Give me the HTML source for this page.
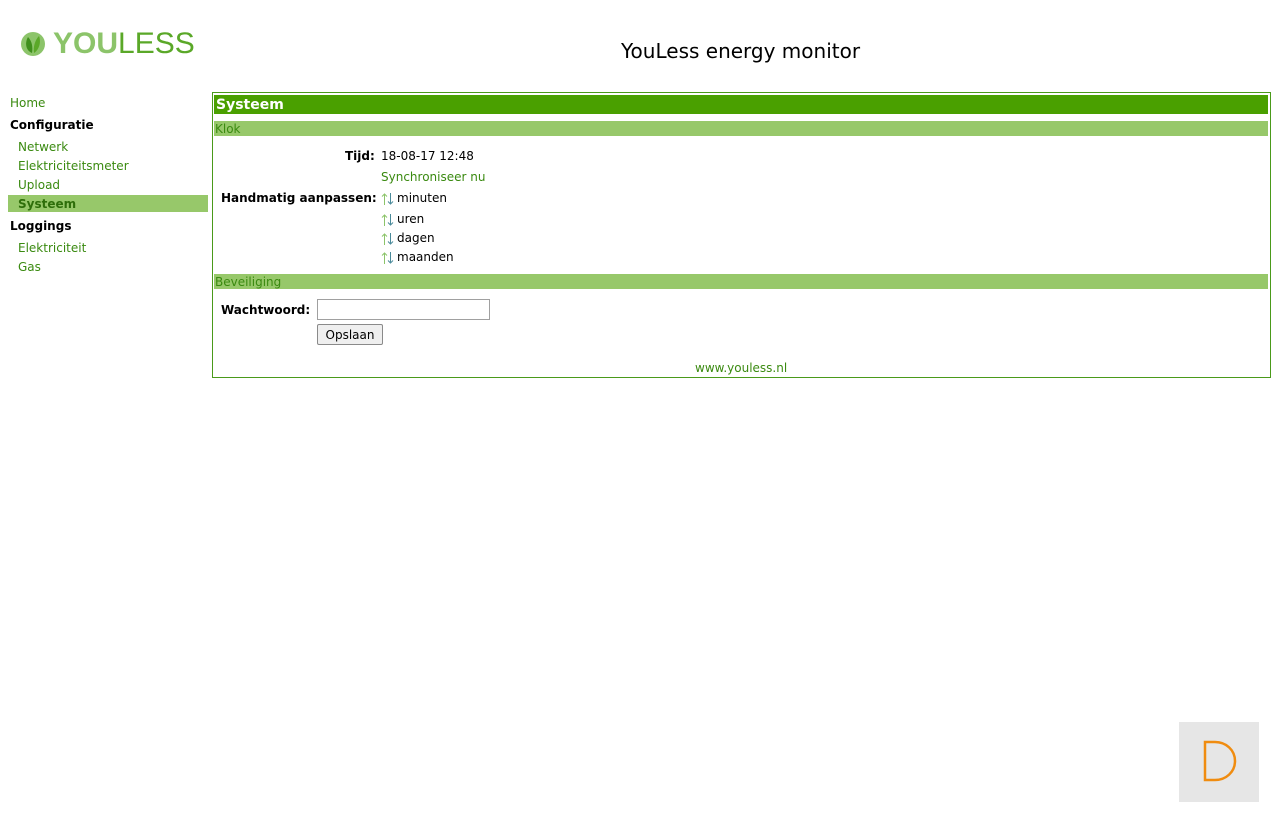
<!DOCTYPE html>
<html><head><meta charset="utf-8"><style>
*{margin:0;padding:0;box-sizing:border-box}
body{width:1279px;height:822px;background:#fff;font-family:"DejaVu Sans","Liberation Sans",sans-serif;font-size:12px;color:#000;position:relative;overflow:hidden}
.a{position:absolute;white-space:nowrap}
.t{margin-top:1px}
.g{color:#3a8a10}
.b{font-weight:bold}
</style></head><body>
<svg class="a" style="left:20px;top:31px" width="26" height="26" viewBox="0 0 26 26">
<circle cx="13" cy="13" r="12" fill="#8cc46a"/>
<path d="M12 22 C5 19 5 11 8 6 C12 10 13 16 12 22Z" fill="#3f8f1c"/>
<path d="M14 22 C20 18 21 10 19 5 C15 9 13 16 14 22Z" fill="#5aa828"/>
</svg>
<div class="a" style="left:53px;top:27px;font-family:'Liberation Sans',sans-serif;font-size:30px;font-weight:bold;color:#8cc46a">YOU<span style="font-weight:normal;color:#5aa828">LESS</span></div>
<div class="a" style="left:621px;top:39px;font-size:20px">YouLess energy monitor</div>

<div class="a t g" style="left:10px;top:95px">Home</div>
<div class="a t b" style="left:10px;top:117px">Configuratie</div>
<div class="a t g" style="left:18px;top:139px">Netwerk</div>
<div class="a t g" style="left:18px;top:158px">Elektriciteitsmeter</div>
<div class="a t g" style="left:18px;top:177px">Upload</div>
<div class="a" style="left:8px;top:195px;width:200px;height:17px;background:#97c86a"></div>
<div class="a t b" style="left:18px;top:196px;color:#2e6e0a">Systeem</div>
<div class="a t b" style="left:10px;top:218px">Loggings</div>
<div class="a t g" style="left:18px;top:240px">Elektriciteit</div>
<div class="a t g" style="left:18px;top:259px">Gas</div>

<div class="a" style="left:212px;top:92px;width:1059px;height:286px;border:1px solid #4a9a1a"></div>
<div class="a" style="left:214px;top:95px;width:1054px;height:19px;background:#4aa000"></div>
<div class="a t b" style="left:216px;top:96px;color:#fff;font-size:14px">Systeem</div>
<div class="a" style="left:214px;top:121px;width:1054px;height:15px;background:#97c86a"></div>
<div class="a t" style="left:215px;top:121px;color:#3a8a10">Klok</div>
<div class="a t b" style="left:345px;top:148px">Tijd:</div>
<div class="a t" style="left:381px;top:148px">18-08-17 12:48</div>
<div class="a t g" style="left:381px;top:169px">Synchroniseer nu</div>
<div class="a t b" style="left:221px;top:190px">Handmatig aanpassen:</div>
<svg class="a" style="left:381px;top:192px" width="14" height="14"><path d="M3.5 13V2M1 4.5L3.5 2L6 4.5" stroke="#8cc46a" fill="none"/><path d="M9.5 1V12M7 9.5L9.5 12L12 9.5" stroke="#4a8a9a" fill="none"/></svg>
<div class="a t" style="left:397px;top:190px">minuten</div>
<svg class="a" style="left:381px;top:213px" width="14" height="14"><path d="M3.5 13V2M1 4.5L3.5 2L6 4.5" stroke="#8cc46a" fill="none"/><path d="M9.5 1V12M7 9.5L9.5 12L12 9.5" stroke="#4a8a9a" fill="none"/></svg>
<div class="a t" style="left:397px;top:211px">uren</div>
<svg class="a" style="left:381px;top:232px" width="14" height="14"><path d="M3.5 13V2M1 4.5L3.5 2L6 4.5" stroke="#8cc46a" fill="none"/><path d="M9.5 1V12M7 9.5L9.5 12L12 9.5" stroke="#4a8a9a" fill="none"/></svg>
<div class="a t" style="left:397px;top:230px">dagen</div>
<svg class="a" style="left:381px;top:251px" width="14" height="14"><path d="M3.5 13V2M1 4.5L3.5 2L6 4.5" stroke="#8cc46a" fill="none"/><path d="M9.5 1V12M7 9.5L9.5 12L12 9.5" stroke="#4a8a9a" fill="none"/></svg>
<div class="a t" style="left:397px;top:249px">maanden</div>
<div class="a" style="left:214px;top:274px;width:1054px;height:15px;background:#97c86a"></div>
<div class="a t" style="left:215px;top:274px;color:#3a8a10">Beveiliging</div>
<div class="a t b" style="left:221px;top:302px">Wachtwoord:</div>
<div class="a" style="left:317px;top:299px;width:173px;height:21px;border:1px solid #a0a0a0;background:#fff"></div>
<div class="a" style="left:317px;top:324px;width:66px;height:21px;border:1px solid #8a8a8a;border-radius:2px;background:#efefef;text-align:center;line-height:20px">Opslaan</div>
<div class="a t g" style="left:695px;top:360px">www.youless.nl</div>

<div class="a" style="left:1179px;top:722px;width:80px;height:80px;background:#e6e6e6"></div>
<svg class="a" style="left:1179px;top:722px" width="80" height="80"><path d="M26 20V58H36C47 58 56 50 56 39C56 28 47 20 36 20Z" fill="none" stroke="#f08c10" stroke-width="2.5"/></svg>
</body></html>
